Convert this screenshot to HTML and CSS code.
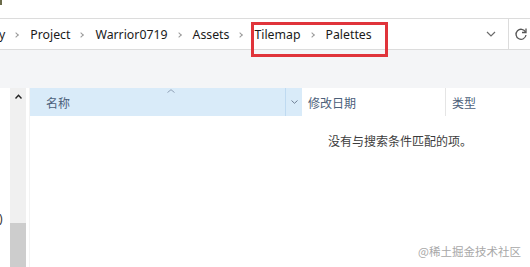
FILE: index.html
```html
<!DOCTYPE html>
<html lang="zh-CN">

<head>
    <meta charset="UTF-8">
    <title>Palettes</title>
    <link rel="stylesheet" href="styles.css">
</head>

<body>
    <div class="window">
        <div class="titlebar"><span class="title-frag"></span></div>

        <div class="addressbar">
            <div class="crumbs">
                <span class="crumb crumb-cut">y</span>
                <span class="chev"></span>
                <span class="crumb">Project</span>
                <span class="chev"></span>
                <span class="crumb">Warrior0719</span>
                <span class="chev"></span>
                <span class="crumb">Assets</span>
                <span class="chev"></span>
                <span class="mark">
                    <span class="crumb">Tilemap</span>
                    <span class="chev"></span>
                    <span class="crumb">Palettes</span>
                </span>
            </div>
            <span class="dropdown">
                <svg width="10" height="6" viewBox="0 0 10 6"><path d="M1 1l4 4 4-4" fill="none" stroke="#6b6b6b" stroke-width="1.2"/></svg>
            </span>
            <span class="refresh">
                <svg width="14" height="14" viewBox="0 0 14 14"><path d="M11.5 5A5 5 0 1 0 12 8" fill="none" stroke="#555" stroke-width="1.3"/><path d="M12 1.5V5.5H8" fill="none" stroke="#555" stroke-width="1.3"/></svg>
            </span>
        </div>

        <div class="toolbar"></div>

        <div class="content">
            <div class="navpane">
                <span class="nav-frag">)</span>
                <div class="scrollbar">
                    <span class="scroll-up">
                        <svg width="7" height="5" viewBox="0 0 7 5"><path d="M0.5 4.5L3.5 1.2 6.5 4.5" fill="none" stroke="#222" stroke-width="1.4"/></svg>
                    </span>
                    <div class="thumb"></div>
                </div>
            </div>

            <div class="files">
                <div class="header">
                    <div class="col col-name">
                        <span class="sort">
                            <svg width="8" height="4" viewBox="0 0 8 4"><path d="M0.5 3.5L4 0.7 7.5 3.5" fill="none" stroke="#8a9bb0" stroke-width="0.9"/></svg>
                        </span>
                        名称
                    </div>
                    <div class="col col-menu">
                        <svg width="7" height="4" viewBox="0 0 7 4"><path d="M0.5 0.5L3.5 3.3 6.5 0.5" fill="none" stroke="#6f7f94" stroke-width="1"/></svg>
                    </div>
                    <div class="col col-date">修改日期</div>
                    <div class="col col-type">类型</div>
                </div>
                <div class="empty">没有与搜索条件匹配的项。</div>
            </div>
        </div>

        <div class="watermark">@稀土掘金技术社区</div>
    </div>
</body>

</html>
```

FILE: styles.css
```css
* {
    margin: 0;
    padding: 0;
    box-sizing: border-box;
}

html,
body {
    width: 530px;
    height: 267px;
    overflow: hidden;
    background: #fff;
}

body {
    font-family: "Noto Sans", "Noto Sans CJK SC", sans-serif;
    color: #1a1a1a;
}

.window {
    position: relative;
    width: 530px;
    height: 267px;
    display: flex;
    flex-direction: column;
}

/* title strip above the address bar */
.titlebar {
    height: 19px;
    border-bottom: 1px solid #dcdcdc;
}

.title-frag {
    display: block;
    width: 2px;
    height: 5px;
    background: #6b6b4a;
}

/* address bar */
.addressbar {
    height: 31px;
    display: flex;
    align-items: center;
    border-bottom: 1px solid #dcdcdc;
}

.crumbs {
    flex: 1;
    display: flex;
    align-items: center;
    gap: 10px;
    font-size: 12.3px;
    height: 100%;
}

.crumb-cut {
    margin-left: -1px;
}

.chev {
    width: 5px;
    height: 7px;
    position: relative;
}

.chev::before {
    content: "";
    position: absolute;
    left: -1px;
    top: 2px;
    width: 3px;
    height: 3px;
    border-right: 1.2px solid #999;
    border-top: 1.2px solid #999;
    transform: rotate(45deg);
}

.mark {
    position: relative;
    display: flex;
    align-items: center;
    gap: 10px;
}

.mark::after {
    content: "";
    position: absolute;
    left: -3px;
    right: -16px;
    top: -4px;
    bottom: -14px;
    border: 3px solid #e0343b;
}

.dropdown {
    width: 18px;
    display: flex;
    justify-content: center;
    margin-right: 8px;
}

.refresh {
    height: 100%;
    width: 22px;
    display: flex;
    align-items: center;
    padding-left: 5px;
    border-left: 1px solid #dcdcdc;
}

/* ribbon / toolbar band */
.toolbar {
    height: 38px;
    background: #f4f5f7;
}

/* main area */
.content {
    flex: 1;
    display: flex;
}

.navpane {
    width: 30px;
    position: relative;
    padding-left: 10px;
    display: flex;
    border-right: 1px solid #f3f3f3;
}

.nav-frag {
    position: absolute;
    left: -1px;
    top: 122px;
    font-size: 12px;
    color: #333;
}

.scrollbar {
    width: 16px;
    background: #f0f0f0;
    display: flex;
    flex-direction: column;
    justify-content: space-between;
}

.scroll-up {
    display: flex;
    justify-content: center;
    padding-top: 6px;
}

.thumb {
    height: 44px;
    background: #cdcdcd;
}

.files {
    flex: 1;
}

.header {
    height: 28px;
    display: flex;
    font-family: "Noto Sans CJK SC", sans-serif;
    font-size: 12px;
    color: #4c607a;
}

.col {
    display: flex;
    align-items: center;
}

.col-name {
    position: relative;
    width: 256px;
    padding-left: 16px;
    background: #d9ebf9;
    border-right: 1px solid #bfdaf1;
}

.sort {
    position: absolute;
    left: 137px;
    top: 0;
    line-height: 0;
}

.col-menu {
    width: 16px;
    justify-content: center;
    background: #d9ebf9;
}

.col-date {
    width: 144px;
    padding-left: 6px;
    border-right: 1px solid #e5e5e5;
}

.col-type {
    padding-left: 6px;
}

.empty {
    padding-top: 16px;
    padding-left: 298px;
    font-family: "Noto Sans CJK SC", sans-serif;
    font-size: 12px;
    color: #3c3c3c;
}

.watermark {
    position: absolute;
    right: 9px;
    bottom: 8px;
    font-family: "Noto Sans CJK SC", sans-serif;
    font-size: 11.5px;
    color: #a8a8a8;
}
```
